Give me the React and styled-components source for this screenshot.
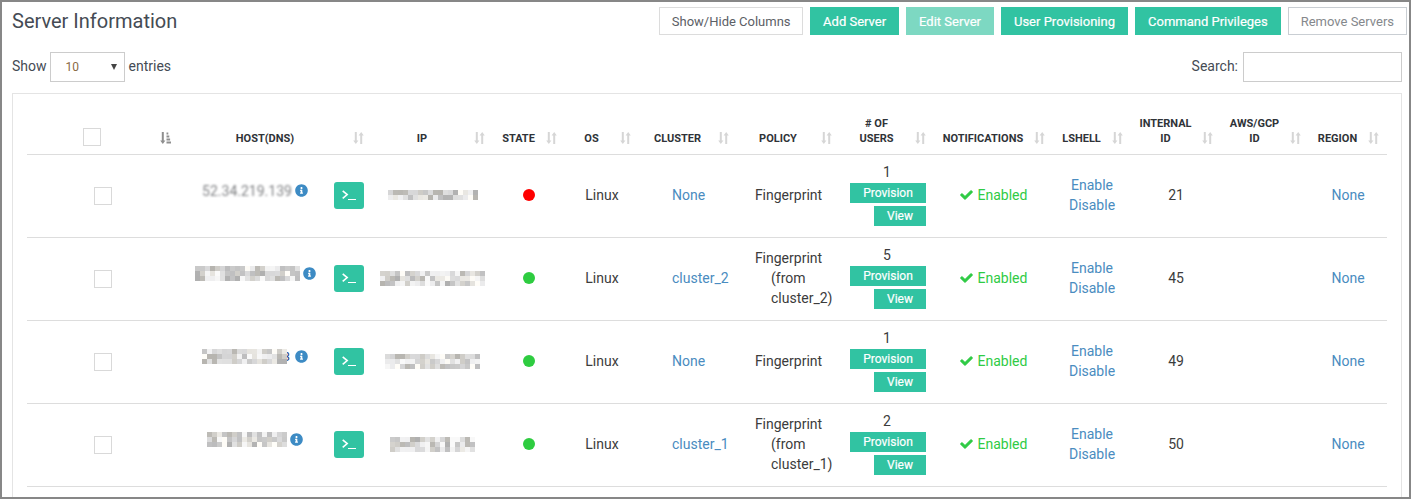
import React from "react";
import styled, { createGlobalStyle } from "styled-components";
import { FaCheck, FaInfoCircle } from "react-icons/fa";

const TEAL = "#31c3a2";
const LINK = "#4a8cc0";

const columns = [
  { label: "", width: 152, checkbox: true, active: true },
  { label: "Host(DNS)", width: 193 },
  { label: "IP", width: 121 },
  { label: "State", width: 72 },
  { label: "OS", width: 74 },
  { label: "Cluster", width: 98 },
  { label: "Policy", width: 103 },
  { label: ["# of", "Users"], width: 94 },
  { label: "Notifications", width: 119 },
  { label: "Lshell", width: 78 },
  { label: ["Internal", "ID"], width: 90 },
  { label: ["AWS/GCP", "ID"], width: 88 },
  { label: "Region", width: 78 },
];

const servers = [
  { host: { plain: "52.34.219.139" }, ip: { cols: 18, lines: 2, seed: 3 }, online: false, cluster: "None", users: 1, id: 21 },
  { host: { cols: 21, lines: 3, seed: 11 }, ip: { cols: 21, lines: 3, seed: 7 }, online: true, cluster: "cluster_2", users: 5, id: 45 },
  { host: { cols: 17, lines: 3, seed: 19, tail: "3" }, ip: { cols: 19, lines: 3, seed: 23 }, online: true, cluster: "None", users: 1, id: 49 },
  { host: { cols: 16, lines: 3, seed: 31 }, ip: { cols: 17, lines: 3, seed: 37 }, online: true, cluster: "cluster_1", users: 2, id: 50 },
];

// the address columns are pixelated in the picture, so they are little blocks here too
const mosaicColour = (seed, i) => {
  const n = Math.abs(Math.sin(seed * 12.9 + i * 78.2) * 43758.5);
  const f = n - Math.floor(n);
  const v = Math.round(176 + f * 78);
  const tint = Math.round((f * 10) % 3);
  return `rgb(${v + (tint === 1 ? 2 : 0)}, ${v}, ${v - (tint === 1 ? 5 : 0) + (tint === 2 ? 1 : 0)})`;
};

const Mosaic = ({ cols, lines, seed }) => (
  <MosaicGrid $cols={cols}>
    {Array.from({ length: cols * lines }, (_, i) => (
      <MosaicCell key={i} style={{ background: mosaicColour(seed, i) }} />
    ))}
  </MosaicGrid>
);

const SortIcon = ({ active }) => (
  <SortSvg viewBox="0 0 11 12" $active={active}>
    <path d="M1.8 0h2v8.5h1.6L2.8 12 0.2 8.5h1.6z" />
    {active ? (
      <path d="M6.5 0.5h1.8v2H6.5zM6.5 3.5h2.8v2H6.5zM6.5 6.5h3.6v2H6.5zM6.5 9.5h4.5v2H6.5z" />
    ) : (
      <path d="M7.2 12h2V3.5h1.6L8.2 0 5.6 3.5h1.6z" />
    )}
  </SortSvg>
);

const TerminalIcon = () => (
  <svg width="14" height="10" viewBox="0 0 14 10" fill="none" stroke="#fff">
    <path d="M0.7 0.8 5.2 4.6 0.7 8.4" strokeWidth="1.6" />
    <path d="M6 9.5H14" strokeWidth="1" />
  </svg>
);

const App = () => {
  return (
    <Frame>
      <GlobalStyle />
      <TitleBar>
        <Title>Server Information</Title>
        <Actions>
          <OutlineButton>Show/Hide Columns</OutlineButton>
          <FillButton>Add Server</FillButton>
          <FillButton $disabled>Edit Server</FillButton>
          <FillButton>User Provisioning</FillButton>
          <FillButton>Command Privileges</FillButton>
          <OutlineButton $muted>Remove Servers</OutlineButton>
        </Actions>
      </TitleBar>
      <FilterBar>
        <FilterLabel>
          Show
          <PageSize>
            <span>10</span>
            <Caret />
          </PageSize>
          entries
        </FilterLabel>
        <FilterLabel>
          Search:
          <SearchInput />
        </FilterLabel>
      </FilterBar>
      <Panel>
        <Table>
          <colgroup>
            {columns.map((c, i) => (
              <col key={i} width={c.width} />
            ))}
          </colgroup>
          <thead>
            <tr>
              {columns.map((c, i) => (
                <HeadCell key={i}>
                  <HeadInner>
                    <HeadLabel>
                      {c.checkbox && <Checkbox $head />}
                      {[].concat(c.label).map((line) => (
                        <div key={line}>{line}</div>
                      ))}
                    </HeadLabel>
                    <SortIcon active={c.active} />
                  </HeadInner>
                </HeadCell>
              ))}
            </tr>
          </thead>
          <tbody>
            {servers.map((s) => (
              <tr key={s.id}>
                <Cell>
                  <Checkbox />
                </Cell>
                <Cell>
                  <HostCell>
                    <HostName>
                      {s.host.plain ? (
                        <BlurredText>{s.host.plain}</BlurredText>
                      ) : (
                        <Mosaic {...s.host} />
                      )}
                      {s.host.tail && <HostTail>{s.host.tail}</HostTail>}
                      <InfoIcon />
                    </HostName>
                    <TerminalButton>
                      <TerminalIcon />
                    </TerminalButton>
                  </HostCell>
                </Cell>
                <Cell>
                  <CenterBox>
                    <Mosaic {...s.ip} />
                  </CenterBox>
                </Cell>
                <Cell>
                  <StateDot $online={s.online} />
                </Cell>
                <Cell>Linux</Cell>
                <Cell>
                  <ClusterName>{s.cluster}</ClusterName>
                </Cell>
                <Cell>
                  Fingerprint
                  {s.cluster !== "None" && (
                    <PolicySource>
                      (from
                      <br />
                      {s.cluster})
                    </PolicySource>
                  )}
                </Cell>
                <Cell>
                  <UsersCount>{s.users}</UsersCount>
                  <SmallActions>
                    <SmallButton $wide>Provision</SmallButton>
                    <SmallButton>View</SmallButton>
                  </SmallActions>
                </Cell>
                <Cell>
                  <Enabled>
                    <CheckIcon />
                    Enabled
                  </Enabled>
                </Cell>
                <Cell>
                  <Link>Enable</Link>
                  <br />
                  <Link>Disable</Link>
                </Cell>
                <Cell>{s.id}</Cell>
                <Cell />
                <Cell>
                  <Link>None</Link>
                </Cell>
              </tr>
            ))}
          </tbody>
        </Table>
      </Panel>
    </Frame>
  );
};

const GlobalStyle = createGlobalStyle`
  html, body {
    margin: 0;
    padding: 0;
    background: #fff;
  }
  * {
    box-sizing: border-box;
  }
`;

const Frame = styled.div`
  display: flex;
  flex-direction: column;
  width: 1411px;
  height: 499px;
  padding: 5px 2px 0 10px;
  overflow: hidden;
  border: 2px solid #878787;
  background: #fff;
  color: #3c3c3c;
  font-family: Roboto, "Liberation Sans", sans-serif;
  font-size: 14px;
`;

const TitleBar = styled.div`
  display: flex;
  justify-content: space-between;
  align-items: flex-start;
`;

const Title = styled.h1`
  margin: 0;
  font-size: 20px;
  font-weight: 400;
  line-height: 28px;
  color: #454b54;
`;

const Actions = styled.div`
  display: flex;
  gap: 7px;
`;

const FillButton = styled.div`
  display: flex;
  align-items: center;
  height: 28px;
  padding: 0 13px;
  background: ${(p) => (p.$disabled ? "#7dd8c2" : TEAL)};
  color: #fff;
  font-size: 13px;
  font-weight: 400;
  -webkit-text-stroke: 0.2px #fff;
`;

const OutlineButton = styled.div`
  display: flex;
  align-items: center;
  height: 28px;
  padding: 0 ${(p) => (p.$muted ? "12px" : "11.5px")};
  border: 1px solid ${(p) => (p.$muted ? "#c9ced3" : "#dcdcdc")};
  color: ${(p) => (p.$muted ? "#85888c" : "#5c6066")};
  font-size: 13px;
`;

const FilterBar = styled.div`
  display: flex;
  justify-content: space-between;
  margin: 17px 5px 11px 0;
`;

const FilterLabel = styled.div`
  display: flex;
  align-items: center;
  gap: 3px;
  padding-bottom: 2px;
  color: #454b54;
`;

const PageSize = styled.div`
  display: flex;
  justify-content: space-between;
  align-items: center;
  width: 75px;
  height: 30px;
  margin: 0 1px -2px 0;
  padding: 0 7px 0 15px;
  border: 1px solid #ccc;
  color: #8a6a45;
  font-size: 12px;
`;

const Caret = styled.i`
  width: 0;
  height: 0;
  border-left: 3px solid transparent;
  border-right: 3px solid transparent;
  border-top: 6px solid #444;
`;

const SearchInput = styled.div`
  width: 159px;
  height: 30px;
  margin: 0 0 -2px 2px;
  border: 1px solid #ccc;
`;

const Panel = styled.div`
  flex: 1;
  margin-right: 5px;
  padding: 14px 14px 0;
  border: 1px solid #e4e4e4;
  border-bottom: none;
`;

const Table = styled.table`
  width: 1360px;
  table-layout: fixed;
  border-collapse: separate;
  border-spacing: 0;
`;

const HeadCell = styled.th`
  height: 47px;
  padding: 0 8px 8px 0;
  vertical-align: bottom;
  border-bottom: 1px solid #ddd;
  font-size: 11px;
  font-weight: 700;
  line-height: 15px;
  text-transform: uppercase;
  color: #2f3338;
`;

const HeadInner = styled.div`
  display: flex;
  align-items: flex-end;
`;

const HeadLabel = styled.div`
  flex: 1;
  padding-right: 2px;
  text-align: center;
`;

const SortSvg = styled.svg`
  flex: none;
  width: 11px;
  height: 12px;
  margin-bottom: 2px;
  fill: ${(p) => (p.$active ? "#8f8f8f" : "#d6d6d6")};
`;

const Cell = styled.td`
  height: 83px;
  padding: 0 8px 2px;
  border-bottom: 1px solid #ddd;
  text-align: center;
  vertical-align: middle;
  line-height: 20px;
  color: #3c3c3c;
`;

const Checkbox = styled.span`
  display: block;
  width: 18px;
  height: 18px;
  margin: ${(p) => (p.$head ? "0 0 0 56px" : "2px auto 0")};
  border: 1px solid #d9d9d9;
`;

const HostCell = styled.div`
  display: flex;
  align-items: center;
  margin-left: -8px;
`;

const HostName = styled.div`
  flex: 1;
  display: flex;
  justify-content: center;
  align-items: center;
  gap: 3px;
  margin-bottom: 9px;
  padding-right: 3px;
`;

const BlurredText = styled.span`
  color: #808285;
  font-size: 14px;
  filter: blur(1.1px);
`;

// only the last sliver shows, the rest sits under the pixelated blocks
const HostTail = styled.span`
  margin: 0 2px 0 -7px;
  color: #2b4a8a;
  font-size: 13px;
`;

const InfoIcon = styled(FaInfoCircle)`
  flex: none;
  width: 13px;
  height: 13px;
  color: #3d8bc4;
`;

const TerminalButton = styled.div`
  flex: none;
  display: flex;
  justify-content: center;
  align-items: center;
  width: 30px;
  height: 27px;
  border-radius: 3px;
  background: ${TEAL};
`;

const CenterBox = styled.div`
  display: flex;
  justify-content: center;
`;

const MosaicGrid = styled.div`
  position: relative;
  z-index: 1;
  display: grid;
  grid-template-columns: repeat(${(p) => p.$cols}, 5px);
  grid-auto-rows: 5px;
`;

const MosaicCell = styled.i`
  display: block;
`;

const StateDot = styled.span`
  display: block;
  width: 12px;
  height: 12px;
  margin: 0 auto;
  border-radius: 50%;
  background: ${(p) => (p.$online ? "#2ecc40" : "#ff0000")};
`;

const Link = styled.span`
  color: ${LINK};
`;

const ClusterName = styled.div`
  padding-left: 25px;
  color: ${LINK};
  text-align: left;
`;

const PolicySource = styled.div`
  margin-left: 26px;
  margin-right: -20px;
  text-align: left;
`;

const UsersCount = styled.div`
  margin-bottom: 3px;
  line-height: 16px;
`;

const SmallActions = styled.div`
  display: flex;
  flex-direction: column;
  align-items: flex-end;
  gap: 3px;
`;

const SmallButton = styled.div`
  width: ${(p) => (p.$wide ? "76px" : "52px")};
  height: 20px;
  background: ${TEAL};
  color: #fff;
  font-size: 12px;
  font-weight: 400;
  line-height: 20px;
  -webkit-text-stroke: 0.2px #fff;
`;

const Enabled = styled.div`
  display: flex;
  justify-content: center;
  align-items: center;
  gap: 5px;
  color: #2fcb45;
`;

const CheckIcon = styled(FaCheck)`
  width: 13px;
  height: 12px;
  stroke: currentColor;
  stroke-width: 30px;
`;

export default App;
